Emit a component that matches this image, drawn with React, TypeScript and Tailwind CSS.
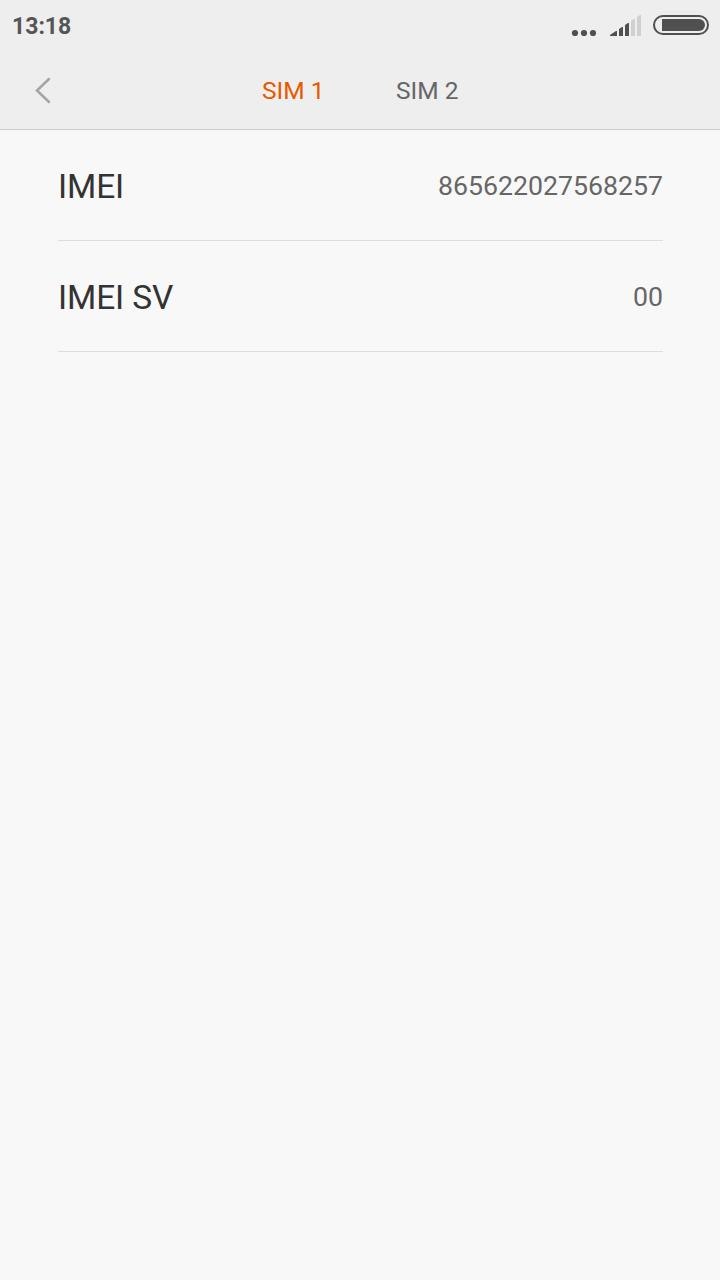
const rows = [
  { label: "IMEI", value: "865622027568257" },
  { label: "IMEI SV", value: "00" },
];

function StatusBar() {
  return (
    <div className="flex h-[50px] items-center justify-between pl-3 pr-[11px]">
      <span className="pt-1 text-[23px] leading-[50px] font-bold text-[#555555]">13:18</span>
      <svg width="138" height="24" viewBox="571 13 138 24" aria-hidden="true">
        <g fill="#505050">
          <circle cx="575" cy="33" r="3.1" />
          <circle cx="584" cy="33" r="3.1" />
          <circle cx="593" cy="33" r="3.1" />
          <path d="M610 36v-1l6-4h1v5zM619 36v-7l3-2h1v9zM625 36V25l3-2h1v13z" />
          <path d="M631 36V21l3-2h1v17zM637 36V17l3-2h1v21z" fill="#d0d0d0" />
          <path d="M662 19h37a6 6 0 0 1 0 12h-37z" />
        </g>
        <rect x="654" y="16" width="54" height="18" rx="9" fill="none" stroke="#505050" strokeWidth="2" />
      </svg>
    </div>
  );
}

export default function App() {
  return (
    <div className="h-[1280px] w-[720px] overflow-hidden bg-[#f8f8f8] font-[Roboto,sans-serif]">
      <header className="h-[130px] border-b border-[#cccccc] bg-[#eeeeee]">
        <StatusBar />
        <div className="flex h-20 items-center pt-0.5">
          <button aria-label="Back" className="ml-[33px] w-[229px]">
            <svg
              width="20"
              height="28"
              viewBox="33 77 20 28"
              fill="none"
              stroke="#a4a4a4"
              strokeWidth="2.5"
              strokeLinecap="round"
            >
              <path d="M49 79L37 90.5L49 102" />
            </svg>
          </button>
          <button className="w-[134px] pt-px text-left text-[24.5px] text-[#e85a00]">SIM 1</button>
          <button className="pt-px text-left text-[24.5px] text-[#666666]">SIM 2</button>
        </div>
      </header>
      <main className="px-[58px]">
        {rows.map((row) => (
          <div
            key={row.label}
            className="flex h-[111px] w-[605px] items-center justify-between border-b border-[#dddddd] pt-[3px]"
          >
            <span className="pt-0.5 text-[33.5px] tracking-[-0.1px] text-[#333333]">{row.label}</span>
            <span className="text-[26.7px] text-[#666666]">{row.value}</span>
          </div>
        ))}
      </main>
    </div>
  );
}
